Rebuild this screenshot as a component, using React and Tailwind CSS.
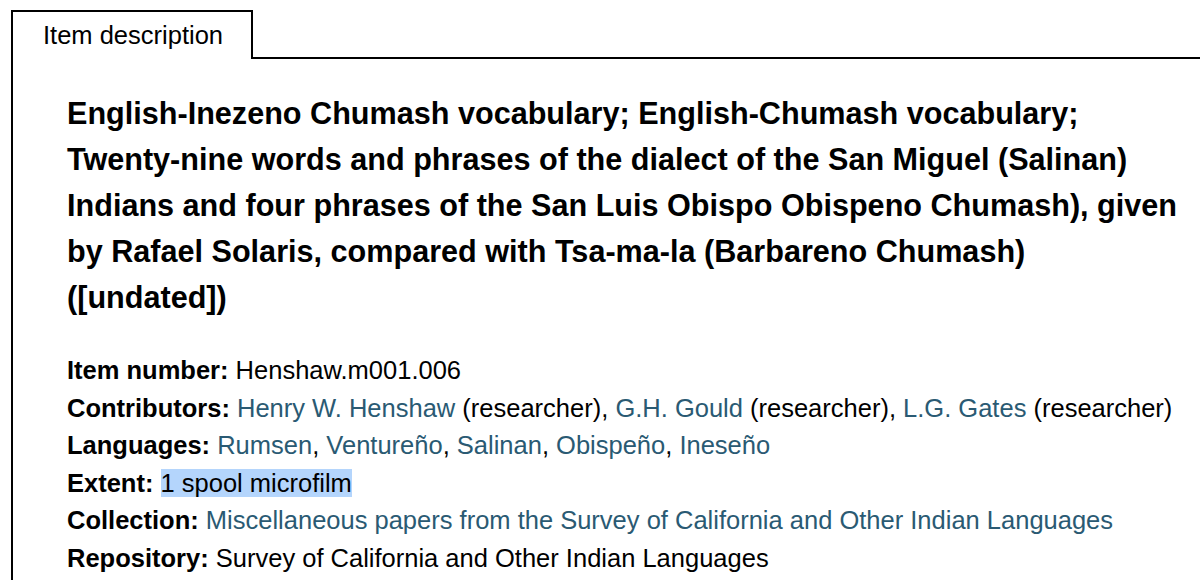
export default function App() {
  const link = "text-[#2a5a73]"
  return (
    <div className="min-h-[580px] w-[1200px] overflow-hidden bg-white pl-[11px] pt-[10px] font-['Liberation_Sans',Arial,sans-serif] text-black">
      <div className="flex">
        <div className="flex h-[49px] w-[242px] items-center border-2 border-b-0 border-black pl-[30px] text-[25.5px]">
          Item description
        </div>
        <div className="flex-1 border-b-2 border-black" />
      </div>
      <div className="h-[540px] border-l-2 border-black pl-[54px] pt-[31px]">
        <h1 className="text-[30.6px] font-bold leading-[46px]">
          English-Inezeno Chumash vocabulary; English-Chumash vocabulary;
          <br />
          Twenty-nine words and phrases of the dialect of the San Miguel (Salinan)
          <br />
          Indians and four phrases of the San Luis Obispo Obispeno Chumash), given
          <br />
          by Rafael Solaris, compared with Tsa-ma-la (Barbareno Chumash)
          <br />
          ([undated])
        </h1>
        <div className="mt-[32px] text-[25.5px] leading-[37.6px]">
          <div>
            <b>Item number:</b> Henshaw.m001.006
          </div>
          <div>
            <b>Contributors:</b> <span className={link}>Henry W. Henshaw</span> (researcher),{" "}
            <span className={link}>G.H. Gould</span> (researcher),{" "}
            <span className={link}>L.G. Gates</span> (researcher)
          </div>
          <div>
            <b>Languages:</b> <span className={link}>Rumsen</span>,{" "}
            <span className={link}>Ventureño</span>, <span className={link}>Salinan</span>,{" "}
            <span className={link}>Obispeño</span>, <span className={link}>Ineseño</span>
          </div>
          <div>
            <b>Extent:</b> <span className="bg-[#b4d5fc]">1 spool microfilm</span>
          </div>
          <div>
            <b>Collection:</b>{" "}
            <span className={link}>
              Miscellaneous papers from the Survey of California and Other Indian Languages
            </span>
          </div>
          <div>
            <b>Repository:</b> Survey of California and Other Indian Languages
          </div>
        </div>
      </div>
    </div>
  )
}
